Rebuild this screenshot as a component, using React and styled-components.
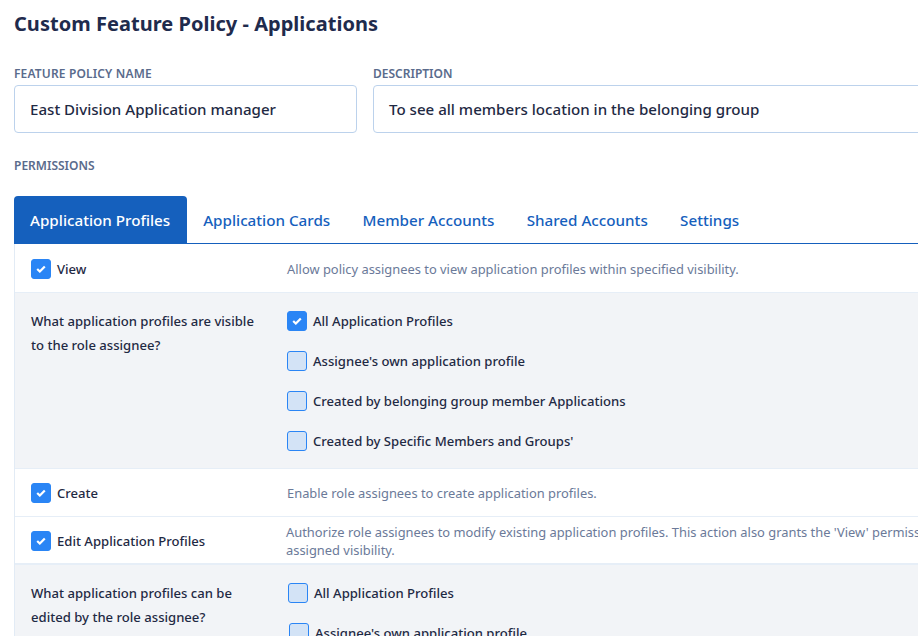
import React from "react";
import styled, { createGlobalStyle } from "styled-components";

const GlobalStyle = createGlobalStyle`
  html, body {
    margin: 0;
    height: 636px;
    overflow: hidden;
    background: #fff;
  }
  * {
    box-sizing: border-box;
  }
`;

const Page = styled.div`
  width: 1240px;
  height: 636px;
  overflow: hidden;
  padding: 10px 0 0 14px;
  font-family: "Noto Sans", "Open Sans", sans-serif;
  color: #1f2a44;
`;

const Title = styled.h1`
  margin: 0;
  font-size: 20px;
  line-height: 27px;
  font-weight: 700;
  letter-spacing: 0.03px;
  color: #1f2b4d;
`;

const Fields = styled.div`
  display: flex;
  gap: 16px;
  margin-top: 29px;
`;

const Field = styled.div`
  width: ${(p) => p.$width}px;
`;

const Label = styled.div`
  font-size: 12px;
  line-height: 16px;
  font-weight: 600;
  letter-spacing: ${(p) => p.$spacing || 0}px;
  color: #5a6b8c;
`;

const InputBox = styled.div`
  height: 48px;
  margin-top: 3px;
  padding-left: 15px;
  display: flex;
  align-items: center;
  border: 1px solid #bcd2ec;
  border-radius: 4px;
  font-size: 15.1px;
  font-weight: 500;
  color: #1f2a44;
`;

const PermissionsLabel = styled(Label)`
  margin-top: 25px;
`;

const Tabs = styled.div`
  display: flex;
  margin-top: 22px;
  height: 48px;
  border-bottom: 1px solid #1560bd;
`;

const Tab = styled.div`
  height: 47px;
  padding: 0 ${(p) => (p.$active ? "17px" : "16px")} 0 16px;
  display: flex;
  align-items: center;
  font-size: 15.2px;
  font-weight: 500;
  color: ${(p) => (p.$active ? "#fff" : "#1560bd")};
  background: ${(p) => (p.$active ? "#1560bd" : "transparent")};
  border-radius: 4px 4px 0 0;
  margin-right: ${(p) => (p.$active ? "0" : "0.25px")};
`;

const Table = styled.div`
  border-left: 1px solid #e2ebf5;
`;

const Row = styled.div`
  display: flex;
  align-items: center;
  height: ${(p) => p.$height}px;
  padding: ${(p) => p.$nudge || 0}px 0 0 16px;
  border-bottom: ${(p) => (p.$thick ? 2 : 1)}px solid #e6eef7;
`;

const CheckCell = styled.div`
  width: 256px;
  flex: none;
  display: flex;
  align-items: center;
  gap: 6px;
`;

const Box = styled.span`
  width: 20px;
  height: 20px;
  flex: none;
  display: flex;
  align-items: center;
  justify-content: center;
  border-radius: 3px;
  background: ${(p) => (p.$checked ? "#2a85f5" : "#d3e3f6")};
  border: 1px solid #2a85f5;
`;

const CheckText = styled.span`
  font-size: 13.1px;
  line-height: 20px;
  font-weight: 500;
  color: #1f2a44;
`;

const Hint = styled.div`
  width: 810px;
  font-size: 12.9px;
  line-height: 18px;
  color: #6b7a99;
  margin-left: ${(p) => (p.$shift ? "-1px" : "0")};
`;

const Section = styled.div`
  display: flex;
  background: #f2f4f7;
  padding: 16px 0 0 16px;
  height: ${(p) => p.$height}px;
  border-bottom: 1px solid #e6eef7;
`;

const QuestionCell = styled.div`
  width: 256px;
  flex: none;
`;

const Question = styled.div`
  width: 232px;
  font-size: 13.1px;
  line-height: 24px;
  font-weight: 500;
  color: #1f2a44;
`;

const Options = styled.div`
  display: flex;
  flex-direction: column;
  gap: 20px;
  padding-top: 2px;
`;

const OptionRow = styled.div`
  display: flex;
  align-items: center;
  gap: 6px;
  margin-left: ${(p) => p.$indent || 0}px;
`;

function Check({ checked, label }) {
  return (
    <>
      <Box $checked={checked}>
        {checked && (
          <svg width="10" height="8" viewBox="0 0 10 8" fill="none">
            <path d="M1.2 4l2.6 2.5L8.8 1.4" stroke="#fff" strokeWidth="2.2" />
          </svg>
        )}
      </Box>
      <CheckText>{label}</CheckText>
    </>
  );
}

export default function App() {
  return (
    <Page>
      <GlobalStyle />
      <Title>Custom Feature Policy - Applications</Title>
      <Fields>
        <Field $width={343}>
          <Label $spacing={0.15}>FEATURE POLICY NAME</Label>
          <InputBox>East Division Application manager</InputBox>
        </Field>
        <Field $width={760}>
          <Label>DESCRIPTION</Label>
          <InputBox>To see all members location in the belonging group</InputBox>
        </Field>
      </Fields>
      <PermissionsLabel>PERMISSIONS</PermissionsLabel>
      <Tabs>
        <Tab $active>Application Profiles</Tab>
        <Tab>Application Cards</Tab>
        <Tab>Member Accounts</Tab>
        <Tab>Shared Accounts</Tab>
        <Tab>Settings</Tab>
      </Tabs>
      <Table>
        <Row $height={49} $nudge={2}>
          <CheckCell>
            <Check checked label="View" />
          </CheckCell>
          <Hint>Allow policy assignees to view application profiles within specified visibility.</Hint>
        </Row>
        <Section $height={176}>
          <QuestionCell>
            <Question>What application profiles are visible to the role assignee?</Question>
          </QuestionCell>
          <Options>
            <OptionRow><Check checked label="All Application Profiles" /></OptionRow>
            <OptionRow><Check label="Assignee's own application profile" /></OptionRow>
            <OptionRow><Check label="Created by belonging group member Applications" /></OptionRow>
            <OptionRow><Check label="Created by Specific Members and Groups'" /></OptionRow>
          </Options>
        </Section>
        <Row $height={48}>
          <CheckCell>
            <Check checked label="Create" />
          </CheckCell>
          <Hint>Enable role assignees to create application profiles.</Hint>
        </Row>
        <Row $height={48} $thick $nudge={2}>
          <CheckCell>
            <Check checked label="Edit Application Profiles" />
          </CheckCell>
          <Hint $shift>
            Authorize role assignees to modify existing application profiles. This action also grants the 'View' permission for profiles within the
            assigned visibility.
          </Hint>
        </Row>
        <Section $height={120}>
          <QuestionCell>
            <Question>What application profiles can be edited by the role assignee?</Question>
          </QuestionCell>
          <Options>
            <OptionRow $indent={1}><Check label="All Application Profiles" /></OptionRow>
            <OptionRow $indent={2}><Check label="Assignee's own application profile" /></OptionRow>
          </Options>
        </Section>
      </Table>
    </Page>
  );
}
